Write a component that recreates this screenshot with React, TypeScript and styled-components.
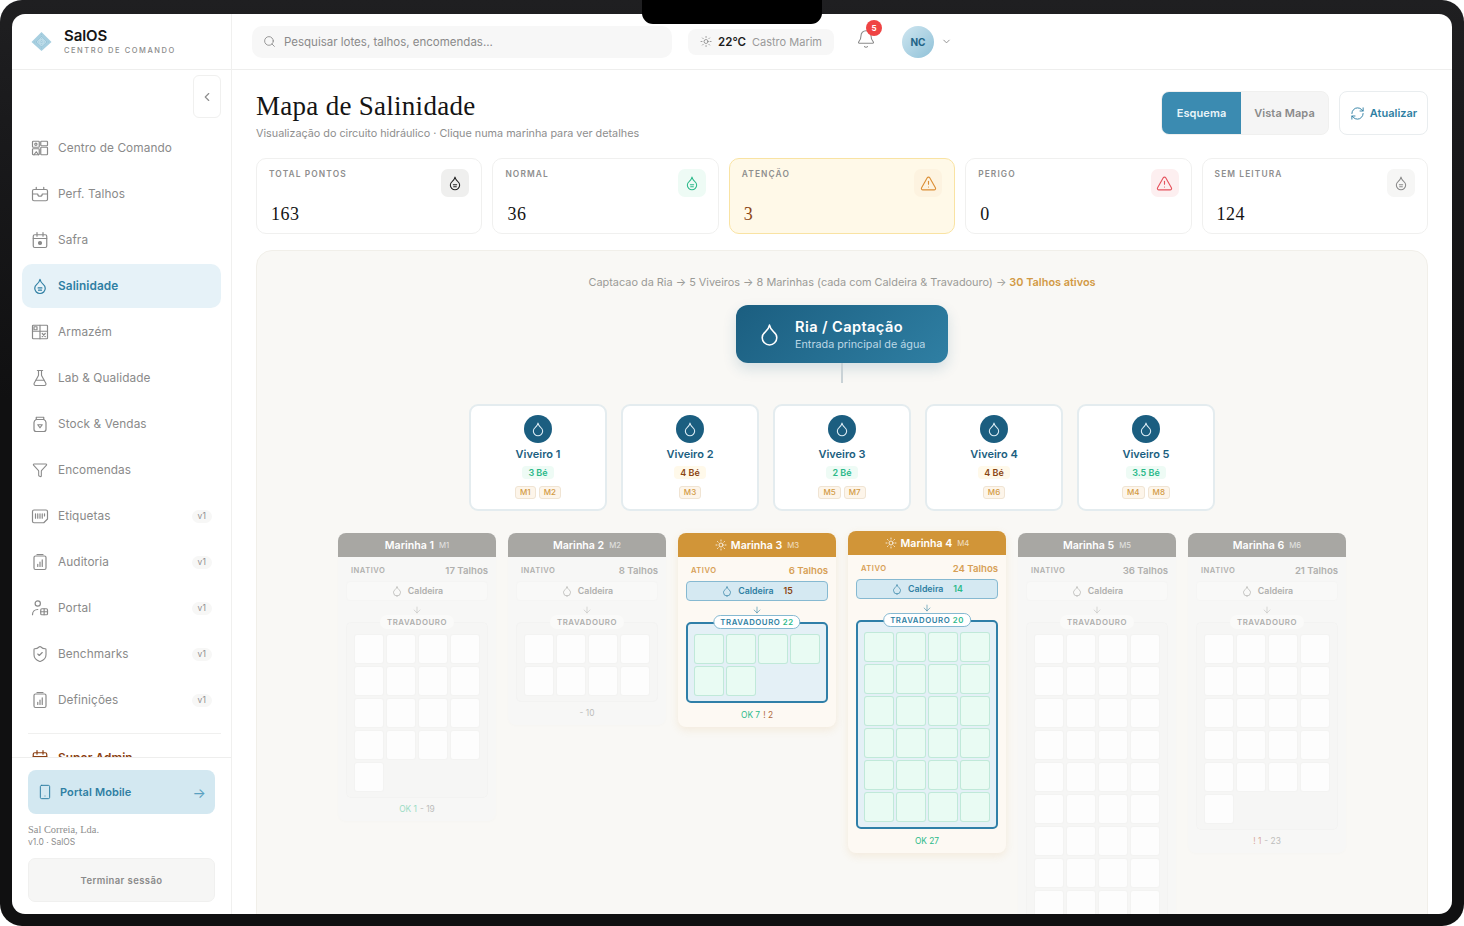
import React from "react";
import styled, { createGlobalStyle } from "styled-components";
import { Search, Sun, Bell, ChevronDown, ChevronLeft, RefreshCw, TriangleAlert, Droplet, FlaskConical, ShieldCheck, Smartphone, ArrowDown, Funnel } from "lucide-react";

const Global = createGlobalStyle`
  html, body { margin: 0; padding: 0; background: #fff; }
  body { font-family: "Inter", "Liberation Sans", sans-serif; -webkit-font-smoothing: antialiased; }
  * { box-sizing: border-box; }
`;

const Frame = styled.div`
  position: relative; width: 1464px; height: 926px; padding: 14px 12px 12px;
  border-radius: 22px; background: linear-gradient(#1f1f21 0, #1a1a1c 120px, #101011 400px);
`;
const Notch = styled.div`
  position: absolute; left: 642px; top: 0; width: 180px; height: 24px;
  background: #000; border-radius: 0 0 11px 11px; z-index: 5;
`;
const Screen = styled.div`
  width: 1440px; height: 900px; background: #fff; border-radius: 13px; overflow: hidden;
  display: grid; grid-template-columns: 220px 1fr;
`;
const Side = styled.aside`
  display: flex; flex-direction: column; height: 900px; border-right: 1px solid #f0f0ef; min-height: 0;
`;
const Brand = styled.div`
  height: 56px; flex: none; display: flex; align-items: center; gap: 12px; padding-left: 19px; border-bottom: 1px solid #eeeeed;
`;
const BrandText = styled.div`display: flex; flex-direction: column;`;
const BrandName = styled.div`font-size: 15px; font-weight: 600; color: #161616; line-height: 17px; letter-spacing: -0.1px;`;
const BrandSub = styled.div`font-size: 7.5px; font-weight: 500; letter-spacing: 1.55px; color: #8c8c8c; line-height: 11px; margin-top: 1px;`;
const Nav = styled.nav`
  flex: 1; min-height: 0; overflow: hidden; padding: 5px 10px 0; display: flex; flex-direction: column; gap: 2px;
`;
const Collapse = styled.button`
  flex: none; align-self: flex-end; width: 28px; height: 43px; margin-bottom: 6px; border: 1px solid #f0f0ef; border-radius: 6px;
  background: #fff; color: #8f8f8f; display: flex; align-items: center; justify-content: center; padding: 0;
`;
const Item = styled.div<{ $active?: boolean; $admin?: boolean }>`
  flex: none; height: 44px; border-radius: 10px; display: flex; align-items: center; gap: 9px; padding: 0 9px;
  font-size: 11.8px; letter-spacing: 0.1px;
  font-weight: ${p => (p.$active || p.$admin ? 600 : 400)};
  color: ${p => (p.$active ? "#2f7fa3" : p.$admin ? "#8b3f12" : "#8a8a8a")};
  background: ${p => (p.$active ? "#e6f2f8" : "transparent")};
  svg { flex: none; }
`;
const IconSlot = styled.span`width: 18px; height: 18px; flex: none; display: flex; align-items: center; justify-content: center;`;
const ItemLabel = styled.span`flex: 1;`;
const Ver = styled.span`
  font-size: 8.5px; color: #8f8f8f; background: #f7f7f6; border-radius: 7px; padding: 1px 6px; line-height: 11px;
`;
const Rule = styled.div`flex: none; height: 1px; background: #f0f0ef; margin: 9px 0 0 6px;`;
const SideFoot = styled.div`
  flex: none; height: 157px; border-top: 1px solid #eeeeed; padding: 12px 16px 12px; display: flex; flex-direction: column;
`;
const Mobile = styled.div`
  height: 44px; border-radius: 8px; background: #d3e8f1; color: #2f7fa3; display: flex; align-items: center; gap: 7px;
  padding: 0 9px 0 9px; font-size: 11px; font-weight: 600; letter-spacing: 0.1px;
`;
const MobileArrow = styled.span`margin-left: auto; font-size: 14px; font-weight: 400; color: #5aa0c0;`;
const Company = styled.div`font-family: "Liberation Serif", serif; font-size: 10.4px; color: #8d8d8d; line-height: 12px; margin-top: 10px;`;
const Version = styled.div`font-size: 8.5px; color: #8d8d8d; line-height: 12px;`;
const Logout = styled.div`
  height: 44px; margin-top: 10px; border-radius: 7px; background: #f6f6f5; border: 1px solid #f0f0ef; color: #8a8a8a;
  font-size: 9.5px; font-weight: 600; letter-spacing: 0.4px; display: flex; align-items: center; justify-content: center;
`;

const Main = styled.main`display: flex; flex-direction: column; min-width: 0; height: 900px; overflow: hidden;`;
const Top = styled.header`
  flex: none; height: 56px; display: flex; align-items: center; padding: 0 0 0 20px; border-bottom: 1px solid #eeeeed;
`;
const SearchBox = styled.div`
  width: 420px; height: 32px; border-radius: 10px; background: #f7f7f7; display: flex; align-items: center; gap: 8px; padding: 0 11px;
  font-size: 11.5px; color: #8a8a8a; margin-top: 0;
`;
const Weather = styled.div`
  width: 146px; height: 26px; margin-left: 16px; border-radius: 8px; background: #f7f7f7; display: flex; align-items: center; gap: 6px;
  padding: 0 12px; font-size: 11px; color: #9a9a9a; white-space: nowrap;
`;
const Temp = styled.b`font-weight: 600; color: #1c1c1c; font-size: 11.5px;`;
const BellWrap = styled.div`position: relative; margin-left: 22px; width: 20px; height: 22px; color: #8a8a8a; margin-top: -4px;`;
const Dot = styled.span`
  position: absolute; left: 10px; top: -9px; width: 16px; height: 16px; border-radius: 50%; background: #ef4444; color: #fff;
  font-size: 8px; font-weight: 700; display: flex; align-items: center; justify-content: center;
`;
const Avatar = styled.div`
  width: 32px; height: 32px; margin-left: 26px; border-radius: 50%; background: linear-gradient(135deg, #cfe6f0, #8fc1d8);
  color: #1f6487; font-size: 10px; font-weight: 700; display: flex; align-items: center; justify-content: center;
`;
const AvatarChev = styled.div`margin-left: 7px; color: #8a8a8a; display: flex;`;

const Content = styled.div`flex: 1; min-height: 0; overflow: hidden; padding: 21px 24px 0;`;
const HeadRow = styled.div`display: flex; align-items: flex-start; justify-content: space-between; height: 67px;`;
const Title = styled.h1`margin: 0; font-family: "Liberation Serif", serif; font-weight: 400; font-size: 27px; line-height: 30px; color: #141414; letter-spacing: 0.28px;`;
const Sub = styled.p`margin: 5px 0 0; font-size: 10.8px; color: #8e8e8e; line-height: 16px;`;
const Actions = styled.div`display: flex; gap: 10px;`;
const Toggle = styled.div`display: flex; height: 44px; border-radius: 8px; overflow: hidden; background: #f5f5f5; border: 1px solid #f0f0ef;`;
const ToggleBtn = styled.div<{ $on?: boolean }>`
  display: flex; align-items: center; justify-content: center; width: ${p => (p.$on ? "79px" : "87px")};
  font-size: 11px; font-weight: 600; letter-spacing: 0.1px; color: ${p => (p.$on ? "#e9f4f9" : "#8a8a8a")}; background: ${p => (p.$on ? "#3b8bb1" : "transparent")};
`;
const Refresh = styled.div`
  width: 89px; height: 44px; border: 1px solid #e9edef; border-radius: 8px; display: flex; align-items: center; justify-content: center; gap: 5px;
  font-size: 11px; font-weight: 600; color: #2f7fa3;
`;

const Stats = styled.div`display: grid; grid-template-columns: repeat(5, 1fr); gap: 10px; height: 76px; margin-bottom: 16px;`;
const Stat = styled.div<{ $warn?: boolean }>`
  position: relative; border-radius: 10px; padding: 10px 12px 0; border: 1px solid ${p => (p.$warn ? "#f9e3a3" : "#f0f0ef")};
  background: ${p => (p.$warn ? "#fff9e8" : "#fff")}; display: flex; flex-direction: column;
`;
const StatTop = styled.div`display: flex; justify-content: space-between;`;
const StatLabel = styled.div`font-size: 8.4px; font-weight: 600; letter-spacing: 1.1px; color: #8e8e8e; line-height: 10px;`;
const StatIcon = styled.div<{ $bg: string; $fg: string }>`
  width: 28px; height: 28px; border-radius: 7px; background: ${p => p.$bg}; color: ${p => p.$fg}; display: flex; align-items: center; justify-content: center;
`;
const StatValue = styled.div<{ $c: string }>`
  font-family: "Liberation Serif", serif; font-size: 18px; line-height: 22px; color: ${p => p.$c}; letter-spacing: 0.5px; margin-top: 6px; padding-left: 2px;
`;

const Panel = styled.section`
  border: 1px solid #f1efe9; border-radius: 16px; background: #f9f8f5; padding: 24px 0 20px; display: flex; flex-direction: column; align-items: center;
`;
const Caption = styled.div`font-size: 10.9px; line-height: 15px; color: #9b9b97;`;
const CapStrong = styled.b`color: #d29a45; font-weight: 600;`;
const Ria = styled.div`
  margin-top: 15px; width: 212px; height: 58px; border-radius: 12px; background: linear-gradient(135deg, #1b5e80, #2f7fa3);
  box-shadow: 0 6px 14px rgba(27,94,128,.16); display: flex; align-items: center; gap: 13px; padding-left: 21px; color: #fff;
`;
const RiaText = styled.div`padding-top: 1px;`;
const RiaTitle = styled.div`font-size: 14.6px; font-weight: 600; line-height: 19px; letter-spacing: 0.4px;`;
const RiaSub = styled.div`font-size: 10.8px; color: #bcd8e6; line-height: 14px; margin-top: 1px;`;
const Stem = styled.div`width: 2px; height: 20px; background: #c9d2d6;`;
const Viveiros = styled.div`margin-top: 21px; display: flex; gap: 14px;`;
const Viveiro = styled.div`
  width: 138px; height: 107px; border-radius: 9px; background: #fff; border: 2px solid #e4ecef; padding-top: 9px;
  display: flex; flex-direction: column; align-items: center;
`;
const VivIcon = styled.div`width: 28px; height: 28px; border-radius: 50%; background: #1b5e80; color: #dcecf4; display: flex; align-items: center; justify-content: center;`;
const VivName = styled.div`font-size: 11px; font-weight: 600; color: #1b5e80; line-height: 14px; margin-top: 4px;`;
const Be = styled.div<{ $warn?: boolean }>`
  font-size: 9px; font-weight: 600; line-height: 13px; padding: 0 6px; margin-top: 5px; border-radius: 4px;
  color: ${p => (p.$warn ? "#8b4513" : "#2bb98a")}; background: ${p => (p.$warn ? "#fff9ea" : "#eefbf5")};
`;
const Chips = styled.div`display: flex; gap: 3px; margin-top: 7px;`;
const Chip = styled.span`
  font-size: 8px; font-weight: 500; line-height: 11px; color: #d29a45; background: #fdf5ea; border: 1px solid #f0e4d3; border-radius: 3px; padding: 0 4px;
`;
const Marinhas = styled.div`margin-top: 22px; display: flex; gap: 12px; align-items: flex-start;`;
const Card = styled.div<{ $on?: boolean; $lift: number }>`
  width: 158px; flex: none; border-radius: 8px; overflow: hidden; transform: translateY(${p => -p.$lift}px);
  background: ${p => (p.$on ? "#fdf9f3" : "#f7f7f6")};
  box-shadow: ${p => (p.$on ? "0 3px 8px rgba(210,154,69,.14)" : "0 1px 3px rgba(0,0,0,.015)")};
`;
const CardHead = styled.div<{ $on?: boolean }>`
  height: 24px; display: flex; align-items: center; justify-content: center; gap: 4px; color: #fff;
  font-size: 10.6px; font-weight: 600; background: ${p => (p.$on ? "#d19538" : "#a8a7a3")};
`;
const CardCode = styled.span`font-size: 7.8px; font-weight: 400; opacity: .7; margin-left: 1px;`;
const CardBody = styled.div`padding: 6px 8px 1px;`;
const Meta = styled.div<{ $on?: boolean }>`
  height: 14px; display: flex; justify-content: space-between; align-items: center; padding: 0 0 0 5px; margin-bottom: 4px;
  color: ${p => (p.$on ? "#d7a056" : "#b0b0ae")};
`;
const MetaState = styled.span`font-size: 7.6px; font-weight: 600; letter-spacing: 0.5px;`;
const MetaCount = styled.span`font-size: 9.6px; font-weight: 600;`;
const Caldeira = styled.div<{ $on?: boolean }>`
  height: 20px; border-radius: 4px; display: flex; align-items: center; justify-content: center; gap: 5px; font-size: 8.8px; font-weight: 600;
  padding-bottom: 1px;
  border: 1px solid ${p => (p.$on ? "#86b9d1" : "#f5f5f4")}; background: ${p => (p.$on ? "#d5e9f2" : "#f9f9f8")};
  color: ${p => (p.$on ? "#2f7fa3" : "#b0b0ae")};
`;
const CalNum = styled.span<{ $c: string }>`color: ${p => p.$c}; margin-left: 5px;`;
const Flow = styled.div<{ $on?: boolean }>`height: 21px; display: flex; justify-content: center; padding-top: 4px; color: ${p => (p.$on ? "#2f7fa3" : "#bdbdbb")};`;
const Trav = styled.div<{ $on?: boolean }>`
  position: relative; padding: ${p => (p.$on ? "11px 7px 6px" : "12px 8px 6px")}; border-radius: 5px;
  border: ${p => (p.$on ? "2px solid #2f7fa8" : "1px solid #f3f3f2")}; background: ${p => (p.$on ? "#e4f0f6" : "#f6f6f5")};
  display: grid; grid-template-columns: repeat(4, 28px); gap: 4px; justify-content: center;
`;
const TravLabel = styled.div<{ $on?: boolean }>`
  position: absolute; top: ${p => (p.$on ? "-9px" : "-8px")}; left: 50%; transform: translateX(-50%); white-space: nowrap;
  font-size: 7.8px; font-weight: 600; letter-spacing: 0.55px; line-height: 10px; padding: 1px 6px; border-radius: 7px; background: ${p => (p.$on ? "#fff" : "#fafaf9")};
  border: ${p => (p.$on ? "1px solid #86b9d1" : "1px solid transparent")}; color: ${p => (p.$on ? "#2f7fa3" : "#aeaeac")};
`;
const TravNum = styled.span`color: #2bb98a;`;
const Cell = styled.div<{ $on?: boolean }>`
  width: 28px; height: 28px; border-radius: 2px; background: ${p => (p.$on ? "#e9fbf3" : "#fdfdfd")};
  box-shadow: 0 0 0 1px ${p => (p.$on ? "#c0e9d9" : "#f3f3f2")};
`;
const Foot = styled.div<{ $on?: boolean }>`height: ${p => (p.$on ? "23px" : "22px")}; display: flex; align-items: center; justify-content: center; gap: 3px; font-size: 8.4px; color: #bdbdbb;`;
const FootOk = styled.span`color: #2bb98a;`;
const FootOkDim = styled.span`color: #9adcc4;`;
const FootWarn = styled.span<{ $dim?: boolean }>`color: ${p => (p.$dim ? "#d9a9a0" : "#b06a3c")};`;

const I = ({ children, c = "currentColor", s = 18 }: { children: React.ReactNode; c?: string; s?: number }) => (
  <svg width={s} height={s} viewBox="0 0 24 24" fill="none" stroke={c} strokeWidth={1.6} strokeLinecap="round" strokeLinejoin="round">{children}</svg>
);
const DropPath = "M12 22a7 7 0 0 0 7-7c0-2-1-3.9-3-5.5s-3.5-4-4-6.5c-.5 2.5-2 4.9-4 6.5C6 11.1 5 13 5 15a7 7 0 0 0 7 7z";
const DropLines = ({ s = 18 }: { s?: number }) => (
  <I s={s}><path d={DropPath} /><path d="M9.5 14.5h5M10 17.5h4" /></I>
);
const IcDash = () => <I><rect x="2" y="3" width="9" height="8" rx="1" /><rect x="13" y="3" width="9" height="6" rx="1" /><rect x="13" y="11" width="9" height="10" rx="1" /><rect x="2" y="13" width="9" height="8" rx="1" /><circle cx="6.5" cy="7" r="1.5" /><path d="M4 21l3-4 3 4" /></I>;
const IcTalhos = () => <I><rect x="2" y="6" width="20" height="15" rx="2" /><path d="M7 3v3M17 3v3M2 12h7a3 3 0 0 0 6 0h7" /></I>;
const IcSafra = () => <I><rect x="3" y="5" width="18" height="17" rx="2" /><path d="M8 2v5M16 2v5M3 10h18" /><circle cx="12" cy="16" r="2" fill="currentColor" /></I>;
const IcStore = () => <I><rect x="2" y="3" width="20" height="18" rx="1" /><path d="M2 11h20M12 3v18" /><rect x="4" y="5" width="4" height="4" /><path d="M15 14l4 4M19 14l-4 4" /></I>;
const IcJar = () => <I><path d="M7 3h10v3H7z" /><path d="M7 6C5 7 4 8 4 10v9a3 3 0 0 0 3 3h10a3 3 0 0 0 3-3v-9c0-2-1-3-3-4" /><path d="M9 13h6l-3 4z" /></I>;
const IcLabel = () => <I><path d="M4 4h16a2 2 0 0 1 2 2v10l-5 5H4a2 2 0 0 1-2-2V6a2 2 0 0 1 2-2z" /><path d="M6 9v6M9 9v6M12 9v6M15 9v6M18 9v3" /></I>;
const IcAudit = () => <I><rect x="4" y="4" width="16" height="18" rx="2" /><path d="M8 2h8M9 18v-3M12 18v-6M15 18V9" /></I>;
const IcPortal = () => <I><circle cx="9" cy="6" r="3.5" /><path d="M2 21c0-4 3-7 7-7" /><rect x="13" y="13" width="9" height="8" rx="1.5" /><path d="M17.5 13v8M13 17h9" /></I>;
const IcAdmin = ({ c }: { c: string }) => <I c={c}><rect x="3" y="5" width="18" height="17" rx="2" /><path d="M8 2v5M16 2v5M3 10h18" /></I>;
const Logo = () => (
  <svg width="21" height="21" viewBox="0 0 21 21">
    <polygon points="10.5,1 20.5,11 10.5,20 0.5,11" fill="#a7cfe0" />
    <path d="M5 11l5.5-5.5L16 11l-5.5 5z" fill="#bcdbe8" stroke="#93c1d6" strokeWidth=".6" />
    <path d="M3 11h15M10.5 3v15" stroke="#8fbed4" strokeWidth=".5" strokeDasharray="1 1" />
  </svg>
);

const navItems: { label: string; icon: React.ReactNode; v?: boolean; active?: boolean }[] = [
  { label: "Centro de Comando", icon: <IcDash /> },
  { label: "Perf. Talhos", icon: <IcTalhos /> },
  { label: "Safra", icon: <IcSafra /> },
  { label: "Salinidade", icon: <DropLines />, active: true },
  { label: "Armazém", icon: <IcStore /> },
  { label: "Lab & Qualidade", icon: <FlaskConical size={18} strokeWidth={1.5} /> },
  { label: "Stock & Vendas", icon: <IcJar /> },
  { label: "Encomendas", icon: <Funnel size={16} strokeWidth={1.6} /> },
  { label: "Etiquetas", icon: <IcLabel />, v: true },
  { label: "Auditoria", icon: <IcAudit />, v: true },
  { label: "Portal", icon: <IcPortal />, v: true },
  { label: "Benchmarks", icon: <ShieldCheck size={18} strokeWidth={1.5} />, v: true },
  { label: "Definições", icon: <IcAudit />, v: true },
];

const stats = [
  { label: "TOTAL PONTOS", value: "163", bg: "#efefee", fg: "#222", c: "#141414", icon: <DropLines s={16} /> },
  { label: "NORMAL", value: "36", bg: "#eefbf5", fg: "#2bb98a", c: "#141414", icon: <DropLines s={16} /> },
  { label: "ATENÇÃO", value: "3", bg: "#fdf3e0", fg: "#dc8f36", c: "#8b4513", warn: true, icon: <TriangleAlert size={17} strokeWidth={1.6} /> },
  { label: "PERIGO", value: "0", bg: "#fdeff0", fg: "#e5535d", c: "#141414", icon: <TriangleAlert size={17} strokeWidth={1.6} /> },
  { label: "SEM LEITURA", value: "124", bg: "#f6f6f5", fg: "#8a8a8a", c: "#141414", icon: <DropLines s={16} /> },
];

const viveiros = [
  { n: "Viveiro 1", b: "3 Bé", w: false, m: ["M1", "M2"] },
  { n: "Viveiro 2", b: "4 Bé", w: true, m: ["M3"] },
  { n: "Viveiro 3", b: "2 Bé", w: false, m: ["M5", "M7"] },
  { n: "Viveiro 4", b: "4 Bé", w: true, m: ["M6"] },
  { n: "Viveiro 5", b: "3.5 Bé", w: false, m: ["M4", "M8"] },
];

const marinhas = [
  { n: 1, t: 17, cells: 17, lift: 0, on: false, foot: <><FootOkDim>OK 1</FootOkDim><span>- 19</span></> },
  { n: 2, t: 8, cells: 8, lift: 0, on: false, foot: <span>- 10</span> },
  { n: 3, t: 6, cells: 6, lift: 0, on: true, cal: "15", calC: "#8b4513", tr: "22", foot: <><FootOk>OK 7</FootOk><FootWarn>! 2</FootWarn></> },
  { n: 4, t: 24, cells: 24, lift: 2, on: true, cal: "14", calC: "#2bb98a", tr: "20", foot: <FootOk>OK 27</FootOk> },
  { n: 5, t: 36, cells: 36, lift: 0, on: false, foot: null },
  { n: 6, t: 21, cells: 21, lift: 0, on: false, foot: <><FootWarn $dim>! 1</FootWarn><span>- 23</span></> },
];

export default function App() {
  return (
    <Frame>
      <Global />
      <Notch />
      <Screen>
        <Side>
          <Brand>
            <Logo />
            <BrandText>
              <BrandName>SalOS</BrandName>
              <BrandSub>CENTRO DE COMANDO</BrandSub>
            </BrandText>
          </Brand>
          <Nav>
            <Collapse><ChevronLeft size={14} /></Collapse>
            {navItems.map(it => (
              <Item key={it.label} $active={it.active}>
                <IconSlot>{it.icon}</IconSlot>
                <ItemLabel>{it.label}</ItemLabel>
                {it.v && <Ver>v1</Ver>}
              </Item>
            ))}
            <Rule />
            <Item $admin><IconSlot><IcAdmin c="#8b3f12" /></IconSlot><ItemLabel>Super Admin</ItemLabel></Item>
          </Nav>
          <SideFoot>
            <Mobile><Smartphone size={16} strokeWidth={1.5} /><span>Portal Mobile</span><MobileArrow>→</MobileArrow></Mobile>
            <Company>Sal Correia, Lda.</Company>
            <Version>v1.0 · SalOS</Version>
            <Logout>Terminar sessão</Logout>
          </SideFoot>
        </Side>
        <Main>
          <Top>
            <SearchBox><Search size={13} strokeWidth={1.6} />Pesquisar lotes, talhos, encomendas...</SearchBox>
            <Weather><Sun size={15} strokeWidth={1.4} color="#777" /><Temp>22°C</Temp>Castro Marim</Weather>
            <BellWrap><Bell size={20} strokeWidth={1.3} /><Dot>5</Dot></BellWrap>
            <Avatar>NC</Avatar>
            <AvatarChev><ChevronDown size={11} /></AvatarChev>
          </Top>
          <Content>
            <HeadRow>
              <div>
                <Title>Mapa de Salinidade</Title>
                <Sub>Visualização do circuito hidráulico · Clique numa marinha para ver detalhes</Sub>
              </div>
              <Actions>
                <Toggle><ToggleBtn $on>Esquema</ToggleBtn><ToggleBtn>Vista Mapa</ToggleBtn></Toggle>
                <Refresh><RefreshCw size={15} strokeWidth={1.5} />Atualizar</Refresh>
              </Actions>
            </HeadRow>
            <Stats>
              {stats.map(s => (
                <Stat key={s.label} $warn={s.warn}>
                  <StatTop>
                    <StatLabel>{s.label}</StatLabel>
                    <StatIcon $bg={s.bg} $fg={s.fg}>{s.icon}</StatIcon>
                  </StatTop>
                  <StatValue $c={s.c}>{s.value}</StatValue>
                </Stat>
              ))}
            </Stats>
            <Panel>
              <Caption>Captacao da Ria → 5 Viveiros → 8 Marinhas (cada com Caldeira &amp; Travadouro) → <CapStrong>30 Talhos ativos</CapStrong></Caption>
              <Ria>
                <Droplet size={25} strokeWidth={1.5} />
                <RiaText>
                  <RiaTitle>Ria / Captação</RiaTitle>
                  <RiaSub>Entrada principal de água</RiaSub>
                </RiaText>
              </Ria>
              <Stem />
              <Viveiros>
                {viveiros.map(v => (
                  <Viveiro key={v.n}>
                    <VivIcon><Droplet size={16} strokeWidth={1.6} /></VivIcon>
                    <VivName>{v.n}</VivName>
                    <Be $warn={v.w}>{v.b}</Be>
                    <Chips>{v.m.map(m => <Chip key={m}>{m}</Chip>)}</Chips>
                  </Viveiro>
                ))}
              </Viveiros>
              <Marinhas>
                {marinhas.map(m => (
                  <Card key={m.n} $on={m.on} $lift={m.lift}>
                    <CardHead $on={m.on}>
                      {m.on && <Sun size={12} strokeWidth={1.6} />}
                      Marinha {m.n}<CardCode>M{m.n}</CardCode>
                    </CardHead>
                    <CardBody>
                      <Meta $on={m.on}>
                        <MetaState>{m.on ? "ATIVO" : "INATIVO"}</MetaState>
                        <MetaCount>{m.t} Talhos</MetaCount>
                      </Meta>
                      <Caldeira $on={m.on}>
                        <Droplet size={12} strokeWidth={1.4} />Caldeira
                        {m.cal && <CalNum $c={m.calC!}>{m.cal}</CalNum>}
                      </Caldeira>
                      <Flow $on={m.on}><ArrowDown size={10} strokeWidth={1.4} /></Flow>
                      <Trav $on={m.on}>
                        <TravLabel $on={m.on}>TRAVADOURO{m.tr && <TravNum> {m.tr}</TravNum>}</TravLabel>
                        {Array.from({ length: m.cells }, (_, i) => <Cell key={i} $on={m.on} />)}
                      </Trav>
                      {m.foot && <Foot $on={m.on}>{m.foot}</Foot>}
                    </CardBody>
                  </Card>
                ))}
              </Marinhas>
            </Panel>
          </Content>
        </Main>
      </Screen>
    </Frame>
  );
}
